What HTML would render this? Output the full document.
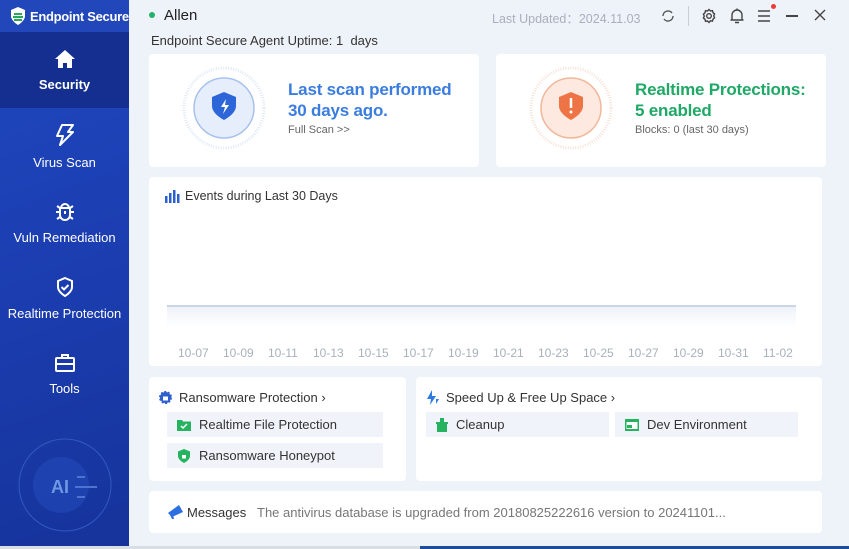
<!DOCTYPE html>
<html><head><meta charset="utf-8"><style>
*{margin:0;padding:0;box-sizing:border-box}
body{width:849px;height:549px;overflow:hidden;font-family:"Liberation Sans","Noto Sans CJK SC",sans-serif;background:#eef2f9;position:relative;font-size:13px;color:#333}
.side{position:absolute;left:0;top:0;width:129px;height:549px;background:linear-gradient(160deg,#2049c0 0%,#1b3db0 50%,#16339a 100%);overflow:hidden}
.logo{height:32px;background:#2147bb;color:#fff;font-weight:bold;font-size:13px;display:flex;align-items:center;padding-left:9px;gap:3px;white-space:nowrap;overflow:hidden;letter-spacing:-0.3px}
.logo svg{flex-shrink:0}
.nav{height:76px;display:flex;flex-direction:column;align-items:center;justify-content:center;color:#fff;font-size:13px;gap:8px}
.nav.act{background:#142f8f;font-weight:bold}
.card{position:absolute;background:#fff;border-radius:4px}
.t{position:absolute;white-space:nowrap}
.item{position:absolute;background:#f0f4fa;height:25px;display:flex;align-items:center;padding-left:10px;gap:8px;font-size:13px;color:#333}
.lbl{position:absolute;top:346px;font-size:12px;color:#aab0bb}
</style></head><body>
<div class="side">
<div class="logo"><svg width="18" height="20" viewBox="0 0 18 20"><path d="M9 1L16 4V10C16 15 9 19 9 19C9 19 2 15 2 10V4Z" fill="#fff"/><path d="M5 8h8M4 11h10M5 14h8" stroke="#2aa85a" stroke-width="2"/></svg>Endpoint Secure</div>
<div class="nav act"><svg width="22" height="20" viewBox="0 0 22 20"><path d="M11 1L1 10h3v9h5v-5h4v5h5v-9h3z" fill="#fff"/></svg>Security</div>
<div class="nav"><svg width="22" height="24" viewBox="0 0 22 24" fill="none" stroke="#fff" stroke-width="2" stroke-linejoin="round"><path d="M8 2h11l-5 7h5L6 22l3-9H3z"/></svg>Virus Scan</div>
<div class="nav"><svg width="22" height="22" viewBox="0 0 22 22" fill="none" stroke="#fff" stroke-width="2"><path d="M6 8h10v7a5 5 0 01-10 0z M7 8a4 4 0 018 0 M11 11v3 M2 12h4M16 12h4M3 6l3 2M19 6l-3 2M3 19l3-2M19 19l-3-2"/></svg>Vuln Remediation</div>
<div class="nav"><svg width="20" height="22" viewBox="0 0 20 22" fill="none" stroke="#fff" stroke-width="2"><path d="M10 2l7 3v6c0 5-7 9-7 9s-7-4-7-9V5z M6.5 11l2.5 2.5 4.5-4.5"/></svg>Realtime Protection</div>
<div class="nav"><svg width="22" height="20" viewBox="0 0 22 20" fill="none" stroke="#fff" stroke-width="2"><rect x="2" y="5" width="18" height="13" rx="1"/><path d="M8 5V2h6v3M2 11h18"/></svg>Tools</div>
<svg style="position:absolute;left:17px;top:437px" width="96" height="96" viewBox="0 0 96 96"><circle cx="48" cy="48" r="46" fill="none" stroke="#3358c0" stroke-width="1"/><circle cx="44" cy="48" r="28" fill="#2147b5" opacity=".7"/><text x="34" y="56" fill="#6f98e4" font-size="18" font-weight="bold" font-family="Liberation Sans">AI</text><path d="M58 50h22M60 40h8M60 60h8" stroke="#4d74d0" stroke-width="2"/></svg>
</div>
<div class="t" style="left:149px;top:12px;width:6px;height:6px;border-radius:50%;background:#1fb36b"></div>
<div class="t" style="left:164px;top:7px;font-size:15px;color:#222">Allen</div>
<div class="t" style="left:151px;top:33px;font-size:13px;color:#333">Endpoint Secure Agent Uptime: 1&nbsp; days</div>
<div class="t" style="left:492px;top:8px;font-size:12.5px;color:#aab0bb">Last Updated：2024.11.03</div>
<svg class="t" style="left:660px;top:8px" width="16" height="16" viewBox="0 0 16 16" fill="none" stroke="#555" stroke-width="1.4"><path d="M3 8a5 5 0 019-3M13 8a5 5 0 01-9 3"/></svg>
<div class="t" style="left:688px;top:6px;width:1px;height:20px;background:#ccc"></div>
<svg class="t" style="left:701px;top:8px" width="16" height="16" viewBox="0 0 16 16" fill="none" stroke="#444" stroke-width="1.4"><circle cx="8" cy="8" r="2.3"/><path d="M8 1.5l1.5 1.5 2-.3.5 2 1.6 1.3-.9 1.9.9 1.9-1.6 1.3-.5 2-2-.3L8 14.5 6.5 13l-2 .3-.5-2-1.6-1.3.9-1.9-.9-1.9L4 4.7l.5-2 2 .3z"/></svg>
<svg class="t" style="left:729px;top:7px" width="16" height="18" viewBox="0 0 16 18" fill="none" stroke="#444" stroke-width="1.4"><path d="M3 13V8a5 5 0 0110 0v5h1.5H1.5zM6 15.5h4M8 1.5v1.5"/></svg>
<svg class="t" style="left:757px;top:9px" width="14" height="14" viewBox="0 0 14 14" stroke="#444" stroke-width="1.4"><path d="M1 2h12M1 7h12M1 12h12"/></svg>
<div class="t" style="left:771px;top:4px;width:5px;height:5px;border-radius:50%;background:#f03a3a"></div>
<div class="t" style="left:786px;top:15px;width:12px;height:1.5px;background:#444"></div>
<svg class="t" style="left:814px;top:9px" width="12" height="12" viewBox="0 0 12 12" stroke="#444" stroke-width="1.4"><path d="M1 1l10 10M11 1L1 11"/></svg>

<div class="card" style="left:149px;top:54px;width:330px;height:113px"></div>
<svg class="t" style="left:182px;top:66px" width="84" height="84" viewBox="0 0 84 84"><circle cx="42" cy="42" r="40" fill="none" stroke="#dfe8f7" stroke-width="3" stroke-dasharray="1 1.5"/><circle cx="42" cy="42" r="30" fill="#e7eefb" stroke="#a8c2ee" stroke-width="1.5"/><path d="M42 26l12 5v9c0 8-12 14-12 14s-12-6-12-14v-9z" fill="#2d66d9"/><path d="M44 33l-5 8h4l-2 7 6-9h-4z" fill="#fff"/></svg>
<div class="t" style="left:288px;top:79px;font-size:17px;font-weight:bold;color:#3b7ddf;line-height:21px;letter-spacing:-0.2px">Last scan performed<br>30 days ago.</div>
<div class="t" style="left:288px;top:124px;font-size:11px;color:#666">Full Scan &gt;&gt;</div>

<div class="card" style="left:496px;top:54px;width:330px;height:113px"></div>
<svg class="t" style="left:529px;top:66px" width="84" height="84" viewBox="0 0 84 84"><circle cx="42" cy="42" r="40" fill="none" stroke="#f6e2d8" stroke-width="3" stroke-dasharray="1 1.5"/><circle cx="42" cy="42" r="30" fill="#fde9df" stroke="#f2b79a" stroke-width="1.5"/><path d="M42 26l12 5v9c0 8-12 14-12 14s-12-6-12-14v-9z" fill="#ef7445"/><path d="M42 32v10" stroke="#fff" stroke-width="2.5"/><circle cx="42" cy="46" r="1.5" fill="#fff"/></svg>
<div class="t" style="left:635px;top:79px;font-size:17px;font-weight:bold;color:#1fa866;line-height:21px;letter-spacing:-0.2px">Realtime Protections:<br>5 enabled</div>
<div class="t" style="left:635px;top:124px;font-size:11px;color:#666">Blocks: 0 (last 30 days)</div>

<div class="card" style="left:149px;top:177px;width:673px;height:189px"></div>
<svg class="t" style="left:165px;top:190px" width="15" height="13" viewBox="0 0 15 13" fill="#2d5fcf"><rect x="0" y="6" width="2.5" height="7"/><rect x="4" y="3" width="2.5" height="10"/><rect x="8" y="0" width="2.5" height="13"/><rect x="12" y="4" width="2.5" height="9"/></svg>
<div class="t" style="left:185px;top:189px;font-size:12.5px;color:#333">Events during Last 30 Days</div>
<div class="t" style="left:167px;top:305px;width:629px;height:2px;background:#cbd5e6"></div>
<div class="t" style="left:167px;top:307px;width:629px;height:20px;background:linear-gradient(#eef2f9,#fff)"></div>
<div class="lbl" style="left:178px">10-07</div><div class="lbl" style="left:223px">10-09</div><div class="lbl" style="left:268px">10-11</div><div class="lbl" style="left:313px">10-13</div><div class="lbl" style="left:358px">10-15</div><div class="lbl" style="left:403px">10-17</div><div class="lbl" style="left:448px">10-19</div><div class="lbl" style="left:493px">10-21</div><div class="lbl" style="left:538px">10-23</div><div class="lbl" style="left:583px">10-25</div><div class="lbl" style="left:628px">10-27</div><div class="lbl" style="left:673px">10-29</div><div class="lbl" style="left:718px">10-31</div><div class="lbl" style="left:763px">11-02</div>

<div class="card" style="left:149px;top:377px;width:257px;height:104px"></div>
<svg class="t" style="left:158px;top:390px" width="15" height="15" viewBox="0 0 15 15"><circle cx="7.5" cy="7.5" r="5.5" fill="#2d5fcf" stroke="#2d5fcf" stroke-width="2" stroke-dasharray="2 1.5"/><rect x="5" y="6.5" width="5" height="4" fill="#fff"/></svg>
<div class="t" style="left:179px;top:390px;font-size:13px">Ransomware Protection ›</div>
<div class="item" style="left:167px;top:412px;width:216px"><svg width="14" height="12" viewBox="0 0 14 12"><path d="M0 1h5l1 1.5h8V12H0z" fill="#25b360"/><path d="M4 7l2 2 4-4" stroke="#fff" stroke-width="1.5" fill="none"/></svg>Realtime File Protection</div>
<div class="item" style="left:167px;top:443px;width:216px"><svg width="14" height="14" viewBox="0 0 14 14"><path d="M7 0l6 2.5v4.5c0 4-6 7-6 7s-6-3-6-7V2.5z" fill="#25b360"/><rect x="5" y="6" width="4" height="3.5" fill="#fff"/></svg>Ransomware Honeypot</div>

<div class="card" style="left:416px;top:377px;width:406px;height:104px"></div>
<svg class="t" style="left:427px;top:390px" width="13" height="15" viewBox="0 0 13 15" fill="#2d7ae0"><path d="M5 0L0 9h4l-1 6 6-9H5z"/><path d="M9 9h3l-3 5z"/></svg>
<div class="t" style="left:446px;top:390px;font-size:13px">Speed Up &amp; Free Up Space ›</div>
<div class="item" style="left:426px;top:412px;width:183px"><svg width="12" height="14" viewBox="0 0 12 14" fill="#25b360"><rect x="4" y="0" width="4" height="4"/><rect x="0" y="4" width="12" height="2"/><path d="M1 6h10v8H1z"/></svg>Cleanup</div>
<div class="item" style="left:615px;top:412px;width:183px"><svg width="14" height="12" viewBox="0 0 14 12" fill="#25b360"><rect x="0" y="0" width="14" height="12"/><rect x="1.5" y="3" width="11" height="7" fill="#fff"/><path d="M2 6h5v3H2z"/></svg>Dev Environment</div>

<div class="card" style="left:149px;top:491px;width:673px;height:42px"></div>
<svg class="t" style="left:167px;top:504px" width="17" height="15" viewBox="0 0 17 15" fill="#2d6fe0"><path d="M1 9l11-8 4 7-11 5z"/><path d="M3 11l2 4h2l-1-4z"/></svg>
<div class="t" style="left:187px;top:505px;font-size:13px;color:#333">Messages</div>
<div class="t" style="left:257px;top:505px;font-size:13px;color:#777">The antivirus database is upgraded from 20180825222616 version to 20241101...</div>
<div class="t" style="left:0;top:546px;width:849px;height:3px;background:#d9dde4"></div>
<div class="t" style="left:420px;top:546px;width:429px;height:3px;background:#1d4c99"></div>
</body></html>
